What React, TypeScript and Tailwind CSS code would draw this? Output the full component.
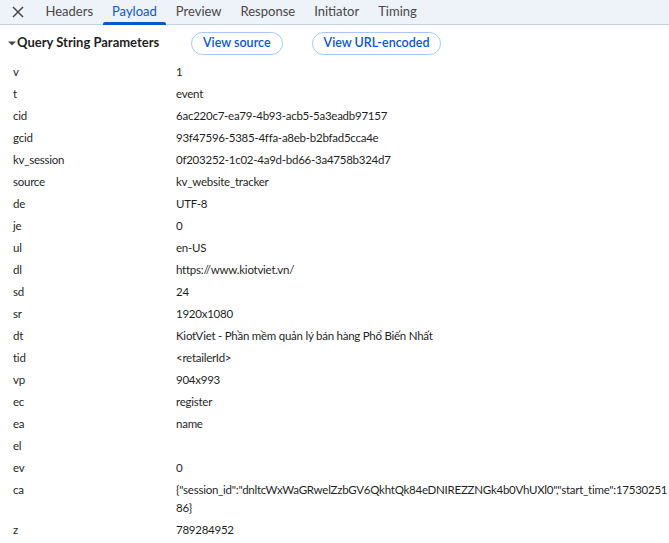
import React from 'react';

const rows: [string, string][] = [
  ['v', '1'],
  ['t', 'event'],
  ['cid', '6ac220c7-ea79-4b93-acb5-5a3eadb97157'],
  ['gcid', '93f47596-5385-4ffa-a8eb-b2bfad5cca4e'],
  ['kv_session', '0f203252-1c02-4a9d-bd66-3a4758b324d7'],
  ['source', 'kv_website_tracker'],
  ['de', 'UTF-8'],
  ['je', '0'],
  ['ul', 'en-US'],
  ['dl', 'https://www.kiotviet.vn/'],
  ['sd', '24'],
  ['sr', '1920x1080'],
  ['dt', 'KiotViet - Phần mềm quản lý bán hàng Phổ Biến Nhất'],
  ['tid', '<retailerId>'],
  ['vp', '904x993'],
  ['ec', 'register'],
  ['ea', 'name'],
  ['el', ''],
  ['ev', '0'],
];

const tabs = ['Headers', 'Payload', 'Preview', 'Response', 'Initiator', 'Timing'];

export default function App() {
  return (
    <div className="w-[669px] h-[543px] overflow-hidden bg-white text-[#1f1f1f] font-['Lato',sans-serif]">
      <div className="flex items-stretch h-[25px] bg-[#eef2f9] border-b border-[#c7d1e3]">
        <button className="w-[36px] flex items-center justify-center text-[#474747]">
          <svg width="12" height="12" viewBox="0 0 12 12" fill="none" stroke="currentColor" strokeWidth="1.5">
            <path d="M1 1L11 11M11 1L1 11" />
          </svg>
        </button>
        {tabs.map((t) => (
          <div
            key={t}
            className={
              'relative px-[9.5px] flex items-center text-[13px] ' +
              (t === 'Payload' ? 'text-[#0b57d0]' : 'text-[#474747]')
            }
          >
            {t}
            {t === 'Payload' && (
              <span className="absolute left-0 right-0 bottom-[-1px] h-[3px] bg-[#0b57d0] rounded-t-[2px]" />
            )}
          </div>
        ))}
      </div>

      <div className="flex items-center h-[36px] pl-[8px]">
        <div className="flex items-center w-[183px] font-bold text-[13px]">
          <svg width="8" height="8" viewBox="0 0 8 8" className="mr-[1px] text-[#474747]">
            <path d="M0 2.5H8L4 6.5Z" fill="currentColor" />
          </svg>
          Query String Parameters
        </div>
        <button className="h-[23px] px-[11px] rounded-full border border-[#a8c7fa] text-[#0b57d0] text-[12.5px] font-semibold">
          View source
        </button>
        <button className="ml-[29px] h-[23px] px-[11px] rounded-full border border-[#a8c7fa] text-[#0b57d0] text-[12.5px] font-semibold">
          View URL-encoded
        </button>
      </div>

      <div className="text-[11.5px] tracking-[-0.25px]">
        {rows.map(([k, v]) => (
          <div key={k} className="flex py-[2px] leading-[18px]">
            <div className="w-[176px] pl-[13px] shrink-0">{k}</div>
            <div className="break-all">{v}</div>
          </div>
        ))}
        <div className="flex py-[2px] leading-[18px]">
          <div className="w-[176px] pl-[13px] shrink-0">ca</div>
          <div>
            <div className="whitespace-nowrap">
              {'{"session_id":"dnltcWxWaGRwelZzbGV6QkhtQk84eDNIREZZNGk4b0VhUXl0","start_time":17530251'}
            </div>
            <div>86{'}'}</div>
          </div>
        </div>
        <div className="flex py-[2px] leading-[18px]">
          <div className="w-[176px] pl-[13px] shrink-0">z</div>
          <div>789284952</div>
        </div>
      </div>
    </div>
  );
}
